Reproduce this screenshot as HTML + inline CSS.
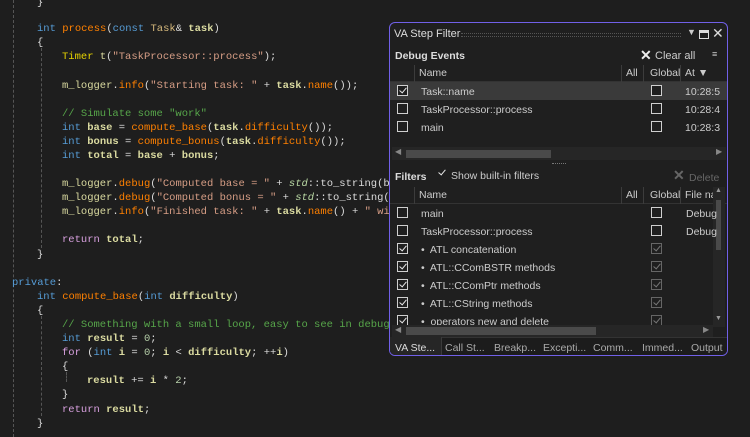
<!DOCTYPE html>
<html><head><meta charset="utf-8"><style>
*{margin:0;padding:0;box-sizing:border-box}
body{width:750px;height:437px;background:#1e1e1e;overflow:hidden;position:relative;font-family:"Liberation Sans",sans-serif}
.code{position:absolute;left:0;top:2px;font-family:"Liberation Mono",monospace;font-size:10.5px;color:#dcdcdc;white-space:pre}
.l{position:absolute;height:14px;line-height:14px}
.k{color:#569cd6}.f{color:#ff8000}.v{color:#dadaa0;font-weight:bold}.c{color:#57a64a}.s{color:#d69d85}.p{color:#d8a0df}.t{color:#e6d300}.ty{color:#d7ba7d}.n{color:#b5cea8}.i{color:#b8d7a3;font-style:italic}.m{color:#dadaa0}
.g{position:absolute;width:0;border-left:1px dashed #555}
.panel{position:absolute;left:389px;top:22px;width:339px;height:334px;background:#1f1f1f;border:1.5px solid #7160e8;border-radius:6px;overflow:hidden;color:#ccc;font-size:10.5px}
.a{position:absolute;white-space:nowrap}
.cb{position:absolute;width:11px;height:11px;border:1px solid #cfcfcf;background:#1f1f1f}
.cb.d{border-color:#666}
.ck::after{content:"";position:absolute;left:2.5px;top:0px;width:3px;height:6px;border:solid #e8e8e8;border-width:0 1.5px 1.5px 0;transform:rotate(40deg)}
.cb.d.ck::after{border-color:#777}
.sep{position:absolute;width:1px;background:#3c3c3c}
</style></head><body>
<div class="g" style="left:13px;top:0;height:437px"></div>
<div class="g" style="left:41px;top:48px;height:200px"></div>
<div class="g" style="left:41px;top:316px;height:100px"></div>
<div class="g" style="left:66px;top:372px;height:10px"></div>
<div class="code">
<div class="l" style="left:37px;top:-6px">}</div>
<div class="l" style="left:37px;top:20px"><span class="k">int</span> <span class="f">process</span>(<span class="k">const</span> <span class="ty">Task</span>&amp; <span class="v">task</span>)</div>
<div class="l" style="left:37px;top:34px">{</div>
<div class="l" style="left:62px;top:48px"><span class="t">Timer</span> <span class="m">t</span>(<span class="s">"TaskProcessor::process"</span>);</div>
<div class="l" style="left:62px;top:77px"><span class="m">m_logger</span>.<span class="f">info</span>(<span class="s">"Starting task: "</span> + <span class="v">task</span>.<span class="f">name</span>());</div>
<div class="l" style="left:62px;top:105px"><span class="c">// Simulate some "work"</span></div>
<div class="l" style="left:62px;top:119px"><span class="k">int</span> <span class="v">base</span> = <span class="f">compute_base</span>(<span class="v">task</span>.<span class="f">difficulty</span>());</div>
<div class="l" style="left:62px;top:133px"><span class="k">int</span> <span class="v">bonus</span> = <span class="f">compute_bonus</span>(<span class="v">task</span>.<span class="f">difficulty</span>());</div>
<div class="l" style="left:62px;top:147px"><span class="k">int</span> <span class="v">total</span> = <span class="v">base</span> + <span class="v">bonus</span>;</div>
<div class="l" style="left:62px;top:175px"><span class="m">m_logger</span>.<span class="f">debug</span>(<span class="s">"Computed base = "</span> + <span class="i">std</span>::to_string(b</div>
<div class="l" style="left:62px;top:189px"><span class="m">m_logger</span>.<span class="f">debug</span>(<span class="s">"Computed bonus = "</span> + <span class="i">std</span>::to_string(</div>
<div class="l" style="left:62px;top:203px"><span class="m">m_logger</span>.<span class="f">info</span>(<span class="s">"Finished task: "</span> + <span class="v">task</span>.<span class="f">name</span>() + <span class="s">" wi</span></div>
<div class="l" style="left:62px;top:231px"><span class="p">return</span> <span class="v">total</span>;</div>
<div class="l" style="left:37px;top:246px">}</div>
<div class="l" style="left:12px;top:274px"><span class="k">private</span>:</div>
<div class="l" style="left:37px;top:288px"><span class="k">int</span> <span class="f">compute_base</span>(<span class="k">int</span> <span class="v">difficulty</span>)</div>
<div class="l" style="left:37px;top:302px">{</div>
<div class="l" style="left:62px;top:316px"><span class="c">// Something with a small loop, easy to see in debug</span></div>
<div class="l" style="left:62px;top:330px"><span class="k">int</span> <span class="v">result</span> = <span class="n">0</span>;</div>
<div class="l" style="left:62px;top:344px"><span class="p">for</span> (<span class="k">int</span> <span class="v">i</span> = <span class="n">0</span>; <span class="v">i</span> &lt; <span class="v">difficulty</span>; ++<span class="v">i</span>)</div>
<div class="l" style="left:62px;top:358px">{</div>
<div class="l" style="left:87px;top:372px"><span class="v">result</span> += <span class="v">i</span> * <span class="n">2</span>;</div>
<div class="l" style="left:62px;top:386px">}</div>
<div class="l" style="left:62px;top:401px"><span class="p">return</span> <span class="v">result</span>;</div>
<div class="l" style="left:37px;top:415px">}</div>
</div>

<div class="panel">
<div class="a" style="left:4px;top:5px;font-size:11px;color:#ddd">VA Step Filter</div>
<div class="a" style="left:71px;top:10px;width:220px;height:4px;border-top:1px dotted #555;border-bottom:1px dotted #555"></div>
<div class="a" style="left:297px;top:4px;font-size:9px">▼</div>
<div class="a" style="left:309px;top:7px;width:10px;height:9px;border:1.5px solid #ddd;border-top-width:3px"></div>
<div class="a" style="left:322px;top:2px;font-size:14px;color:#ddd">✕</div>
<div class="a" style="left:5px;top:27px;font-weight:bold;color:#ddd">Debug Events</div>
<div class="a" style="left:250px;top:24px;font-size:14px;font-weight:bold;color:#eee">✕</div>
<div class="a" style="left:265px;top:27px;font-size:11px">Clear all</div>
<div class="a" style="left:322px;top:26px;font-size:9px">≡</div>
<div class="a" style="left:0;top:42px;width:339px;height:17px;border-bottom:1px solid #333"></div>
<div class="a" style="left:29px;top:44px">Name</div><div class="a" style="left:236px;top:44px">All</div><div class="a" style="left:260px;top:44px">Global</div><div class="a" style="left:295px;top:44px">At ▼</div>
<div class="sep" style="left:24px;top:42px;height:17px"></div><div class="sep" style="left:231px;top:42px;height:17px"></div><div class="sep" style="left:253px;top:42px;height:17px"></div><div class="sep" style="left:290px;top:42px;height:17px"></div>
<div class="a" style="left:0;top:59px;width:339px;height:18px;background:#3a3a3a"></div>
<div class="cb ck" style="left:7px;top:62px"></div><div class="a" style="left:31px;top:63px">Task::name</div><div class="cb" style="left:261px;top:62px"></div><div class="a" style="left:295px;top:63px">10:28:5</div>
<div class="cb" style="left:7px;top:80px"></div><div class="a" style="left:31px;top:81px">TaskProcessor::process</div><div class="cb" style="left:261px;top:80px"></div><div class="a" style="left:295px;top:81px">10:28:4</div>
<div class="cb" style="left:7px;top:98px"></div><div class="a" style="left:31px;top:99px">main</div><div class="cb" style="left:261px;top:98px"></div><div class="a" style="left:295px;top:99px">10:28:3</div>
<div class="a" style="left:2px;top:124px;width:334px;height:13px;background:#262626"></div>
<div class="a" style="left:16px;top:127px;width:145px;height:8px;background:#4a4a4a"></div>
<div class="a" style="left:5px;top:124px;font-size:8px;color:#888">◀</div><div class="a" style="left:326px;top:124px;font-size:8px;color:#888">▶</div>
<div class="a" style="left:162px;top:140px;width:14px;border-top:1px dotted #777"></div>
<div class="a" style="left:5px;top:148px;font-weight:bold;color:#ddd">Filters</div>
<div class="cb ck" style="left:47px;top:145px;border:none"></div>
<div class="a" style="left:61px;top:147px;font-size:10.5px">Show built-in filters</div>
<div class="a" style="left:283px;top:144px;font-size:14px;font-weight:bold;color:#666">✕</div><div class="a" style="left:299px;top:149px;color:#666">Delete</div>
<div class="a" style="left:0;top:164px;width:339px;height:17px;border-bottom:1px solid #333"></div>
<div class="a" style="left:29px;top:166px">Name</div><div class="a" style="left:236px;top:166px">All</div><div class="a" style="left:260px;top:166px">Global</div><div class="a" style="left:295px;top:166px">File na</div>
<div class="sep" style="left:24px;top:164px;height:17px"></div><div class="sep" style="left:231px;top:164px;height:17px"></div><div class="sep" style="left:253px;top:164px;height:17px"></div><div class="sep" style="left:290px;top:164px;height:17px"></div>
<div class="a" style="left:323px;top:164px;width:12px;height:140px;background:#262626"></div>
<div class="a" style="left:326px;top:177px;width:5px;height:50px;background:#4a4a4a"></div>
<div class="a" style="left:325px;top:164px;font-size:7px;color:#999">▲</div><div class="a" style="left:325px;top:292px;font-size:7px;color:#999">▼</div>
<div class="cb" style="left:7px;top:184px"></div><div class="a" style="left:31px;top:185px">main</div><div class="cb" style="left:261px;top:184px"></div><div class="a" style="left:296px;top:185px">Debug</div>
<div class="cb" style="left:7px;top:202px"></div><div class="a" style="left:31px;top:203px">TaskProcessor::process</div><div class="cb" style="left:261px;top:202px"></div><div class="a" style="left:296px;top:203px">Debug</div>
<div class="cb ck" style="left:7px;top:220px"></div><div class="a" style="left:31px;top:221px">•&nbsp; ATL concatenation</div><div class="cb d ck" style="left:261px;top:220px"></div>
<div class="cb ck" style="left:7px;top:238px"></div><div class="a" style="left:31px;top:239px">•&nbsp; ATL::CComBSTR methods</div><div class="cb d ck" style="left:261px;top:238px"></div>
<div class="cb ck" style="left:7px;top:256px"></div><div class="a" style="left:31px;top:257px">•&nbsp; ATL::CComPtr methods</div><div class="cb d ck" style="left:261px;top:256px"></div>
<div class="cb ck" style="left:7px;top:274px"></div><div class="a" style="left:31px;top:275px">•&nbsp; ATL::CString methods</div><div class="cb d ck" style="left:261px;top:274px"></div>
<div class="cb ck" style="left:7px;top:292px"></div><div class="a" style="left:31px;top:293px">•&nbsp; operators new and delete</div><div class="cb d ck" style="left:261px;top:292px"></div>
<div class="a" style="left:2px;top:302px;width:321px;height:12px;background:#262626"></div>
<div class="a" style="left:16px;top:304px;width:190px;height:8px;background:#4a4a4a"></div>
<div class="a" style="left:5px;top:302px;font-size:8px;color:#888">◀</div><div class="a" style="left:313px;top:302px;font-size:8px;color:#888">▶</div>
<div class="a" style="left:0;top:314px;width:339px;height:20px;background:#1c1c1c;border-top:1px solid #333"></div>
<div class="a" style="left:0;top:314px;width:52px;height:20px;background:#262626;border-right:1px solid #3a3a3a"></div>
<div class="a" style="left:5px;top:319px;color:#ddd">VA Ste...</div>
<div class="a" style="left:55px;top:319px;color:#aaa">Call St...</div>
<div class="a" style="left:104px;top:319px;color:#aaa">Breakp...</div>
<div class="a" style="left:153px;top:319px;color:#aaa">Excepti...</div>
<div class="a" style="left:203px;top:319px;color:#aaa">Comm...</div>
<div class="a" style="left:252px;top:319px;color:#aaa">Immed...</div>
<div class="a" style="left:301px;top:319px;color:#aaa">Output</div>
</div>
</body></html>
